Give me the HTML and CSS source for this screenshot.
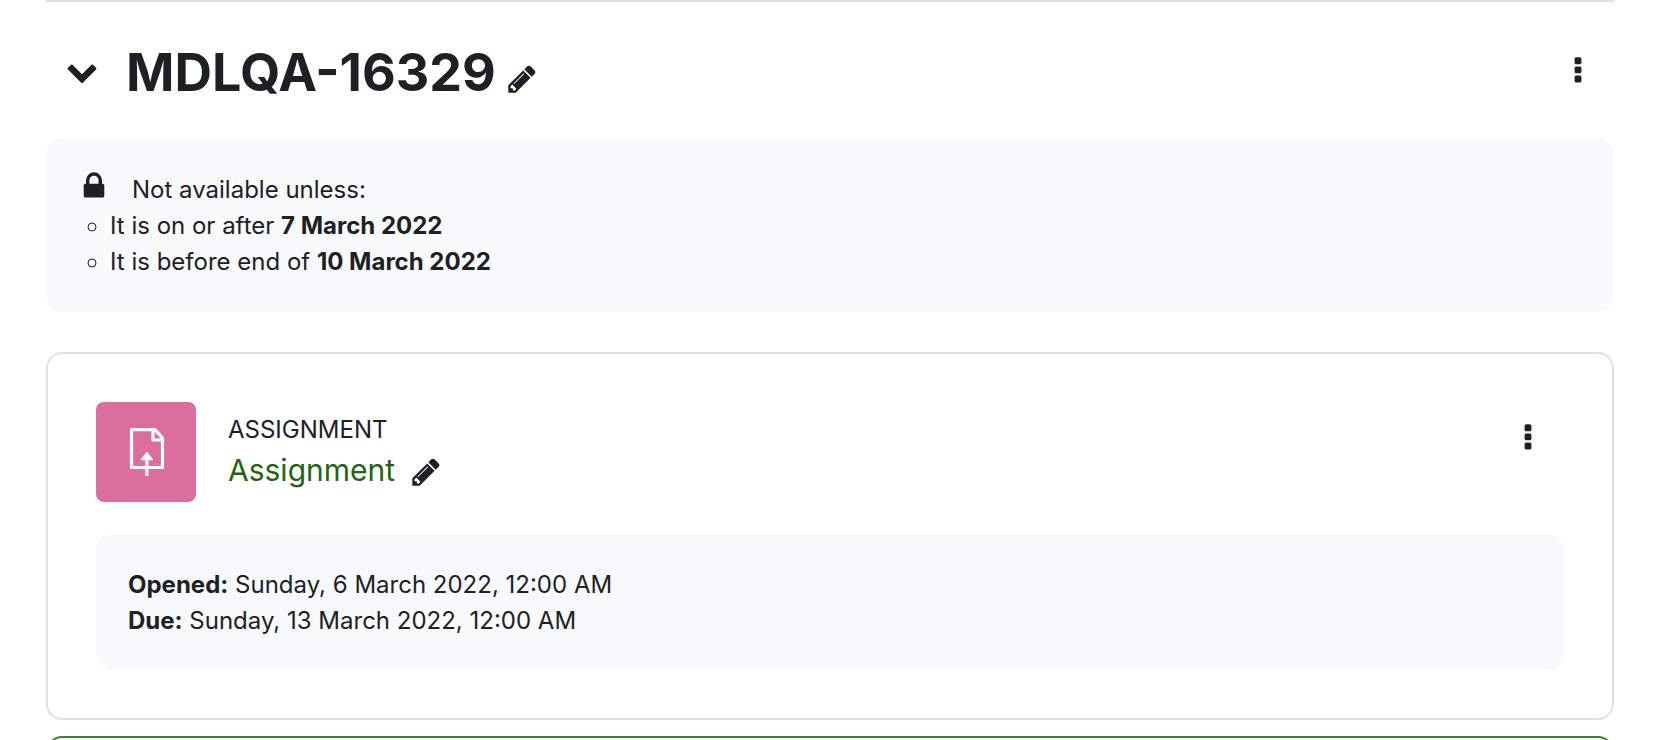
FILE: index.html
```html
<!DOCTYPE html>
<html lang="en">
<head>
  <meta charset="utf-8">
  <title>MDLQA-16329</title>
  <link rel="stylesheet" href="styles.css">
</head>
<body>
  <svg class="sprite" aria-hidden="true">
    <symbol id="icon-chevron" viewBox="0 0 1792 1792"><path d="M1683 808l-742 741q-19 19-45 19t-45-19l-742-741q-19-19-19-45.500t19-45.500l166-165q19-19 45-19t45 19l531 531 531-531q19-19 45-19t45 19l166 165q19 19 19 45.500t-19 45.500z"/></symbol>
    <symbol id="icon-pencil" viewBox="0 0 1792 1792"><path d="M491 1536l91-91-235-235-91 91v107h128v128h107zm523-928q0-22-22-22-10 0-17 7l-542 542q-7 7-7 17 0 22 22 22 10 0 17-7l542-542q7-7 7-17zm-54-192l416 416-832 832h-416v-416zm683 96q0 53-37 90l-166 166-416-416 166-165q36-38 90-38 53 0 91 38l235 234q37 39 37 91z"/></symbol>
    <symbol id="icon-menu" viewBox="0 0 1792 1792"><path d="M1088 1248v192q0 40-28 68t-68 28h-192q-40 0-68-28t-28-68v-192q0-40 28-68t68-28h192q40 0 68 28t28 68zm0-512v192q0 40-28 68t-68 28h-192q-40 0-68-28t-28-68v-192q0-40 28-68t68-28h192q40 0 68 28t28 68zm0-512v192q0 40-28 68t-68 28h-192q-40 0-68-28t-28-68v-192q0-40 28-68t68-28h192q40 0 68 28t28 68z"/></symbol>
    <symbol id="icon-lock" viewBox="0 0 1792 1792"><path d="M640 768h512v-192q0-106-75-181t-181-75-181 75-75 181v192zm832 96v576q0 40-28 68t-68 28h-960q-40 0-68-28t-28-68v-576q0-40 28-68t68-28h32v-192q0-184 132-316t316-132 316 132 132 316v192h32q40 0 68 28t28 68z"/></symbol>
  </svg>

  <main class="course-content">
    <section class="section">
      <header class="section-header">
        <button class="icon-btn" aria-label="Collapse"><svg class="icon"><use href="#icon-chevron"/></svg></button>
        <h2 class="section-title">MDLQA-16329</h2>
        <button class="icon-btn edit-title" aria-label="Edit section name"><svg class="icon"><use href="#icon-pencil"/></svg></button>
        <button class="icon-btn menu" aria-label="Section menu"><svg class="icon"><use href="#icon-menu"/></svg></button>
      </header>

      <div class="info availability">
        <div class="availability-label">
          <svg class="icon"><use href="#icon-lock"/></svg>
          <span>Not available unless:</span>
        </div>
        <ul class="conditions">
          <li>It is on or after <strong>7 March 2022</strong></li>
          <li>It is before end of <strong>10 March 2022</strong></li>
        </ul>
      </div>

      <div class="activity">
        <div class="activity-header">
          <div class="activity-icon">
            <svg viewBox="0 0 48 48" fill="none" stroke="#fff" stroke-width="3.200" stroke-linejoin="round">
              <path d="M9.500 1.600h23.500l7.500 8.500v29.400h-31z"/>
              <path d="M31 2v10h9.500"/>
              <path d="M24.900 48v-17"/>
              <path fill="#fff" stroke="#fff" stroke-width="1.500" d="M24.900 24.800l5.400 6.700h-10.800z"/>
            </svg>
          </div>
          <div class="activity-info">
            <div class="activity-type">Assignment</div>
            <div class="activity-name">
              <a href="#">Assignment</a>
              <button class="icon-btn edit-name" aria-label="Edit title"><svg class="icon"><use href="#icon-pencil"/></svg></button>
            </div>
          </div>
          <button class="icon-btn menu activity-menu" aria-label="Activity menu"><svg class="icon"><use href="#icon-menu"/></svg></button>
        </div>
        <div class="info dates">
          <div><strong>Opened:</strong> Sunday, 6 March 2022, 12:00 AM</div>
          <div><strong>Due:</strong> Sunday, 13 March 2022, 12:00 AM</div>
        </div>
      </div>

      <div class="activity selected"></div>
    </section>
  </main>
</body>
</html>
```

FILE: styles.css
```css
* {
  box-sizing: border-box;
}

body {
  margin: 0;
  font-family: Inter, "Liberation Sans", sans-serif;
  font-size: 24px;
  line-height: 36px;
  color: #1d2125;
  background: #ffffff;
  overflow: hidden;
}

.sprite {
  display: none;
}

.course-content {
  padding: 0 62px 0 46px;
}

.section {
  border-top: 2px solid #dee2e6;
}

.section-header {
  display: flex;
  align-items: center;
  padding: 37px 20px 35px;
}

.section-title {
  margin: 0 10px 0 28px;
  padding-top: 4px;
  font-size: 52px;
  line-height: 60px;
  font-weight: 700;
}

.icon {
  display: block;
  width: 32px;
  height: 32px;
  fill: currentColor;
}

.icon-btn {
  padding: 0;
  border: 0;
  background: none;
  color: inherit;
  cursor: pointer;
}

.edit-title {
  padding-top: 16px;
}

.menu {
  margin-left: auto;
}

.info {
  padding: 32px;
  border-radius: 16px;
  background: #f8f9fa;
}

.availability-label {
  display: flex;
  gap: 22px;
}

.availability-label span {
  padding-top: 2px;
}

.conditions {
  margin: 0;
  padding: 0 0 0 32px;
  list-style: circle;
}

.activity {
  margin-top: 40px;
  padding: 48px;
  border: 2px solid #dee2e6;
  border-radius: 16px;
}

.activity-header {
  display: flex;
  align-items: center;
  gap: 32px;
  margin-bottom: 32px;
}

.activity-icon {
  display: flex;
  align-items: center;
  justify-content: center;
  width: 100px;
  height: 100px;
  border-radius: 8px;
  background: #da6e9f;
}

.activity-icon svg {
  width: 48px;
  height: 48px;
}

.activity-type {
  text-transform: uppercase;
}

.activity-name {
  display: flex;
  align-items: center;
  gap: 15px;
  font-size: 30px;
  line-height: 44px;
}

.activity-name a {
  color: #1f6610;
  text-decoration: none;
}

.edit-name {
  padding-top: 4px;
}

.activity-menu {
  align-self: flex-start;
  margin: 20px 20px 0 auto;
}

.dates {
  padding: 33px 32px 31px;
}

.activity.selected {
  margin-top: 16px;
  border-color: #3f7f2f;
  background: #fafafa;
}
```
